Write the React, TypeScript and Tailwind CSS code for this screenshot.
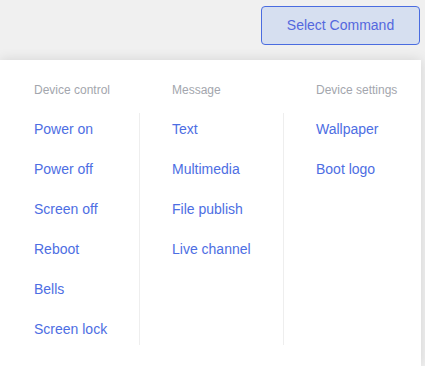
import React from "react";

const cols = [
  {
    title: "Device control",
    items: ["Power on", "Power off", "Screen off", "Reboot", "Bells", "Screen lock"],
    w: "w-[139px]",
    first: true,
  },
  {
    title: "Message",
    items: ["Text", "Multimedia", "File publish", "Live channel"],
    w: "w-[144px]",
    first: false,
  },
  {
    title: "Device settings",
    items: ["Wallpaper", "Boot logo"],
    w: "flex-1",
    first: false,
  },
];

export default function App() {
  return (
    <div className="w-[425px] h-[366px] overflow-hidden bg-[#f0f0f0] flex flex-col font-['Liberation_Sans',Arial,sans-serif]">
      <div className="flex justify-end pr-[5px] pt-[6px] h-[60px]">
        <button className="w-[159px] h-[39px] rounded-[4px] border border-[#4a6ce0] bg-[#d6dff0] text-[14px] text-[#5468de]">
          Select Command
        </button>
      </div>
      <div className="w-[421px] flex-1 bg-white shadow-[0_0_12px_rgba(0,0,0,0.12)] flex pt-[22px]">
        {cols.map((c) => (
          <div key={c.title} className={c.first ? "w-[139px] flex flex-col" : c.w === "flex-1" ? "flex-1 flex flex-col" : "w-[144px] flex flex-col"}>
            <div
              className={
                c.first
                  ? "text-[12px] leading-[16px] text-[#a3a6ad] h-[31px] pl-[34px]"
                  : "text-[12px] leading-[16px] text-[#a3a6ad] h-[31px] pl-[33px]"
              }
            >
              {c.title}
            </div>
            <div
              className={
                c.first
                  ? "h-[232px] pt-[6px] flex flex-col gap-[20px] pl-[34px]"
                  : "h-[232px] pt-[6px] flex flex-col gap-[20px] pl-[32px] border-l border-[#eeeeee]"
              }
            >
              {c.items.map((it) => (
                <div key={it} className="text-[14px] leading-[20px] text-[#4d6ee3] cursor-pointer">
                  {it}
                </div>
              ))}
            </div>
          </div>
        ))}
      </div>
    </div>
  );
}
